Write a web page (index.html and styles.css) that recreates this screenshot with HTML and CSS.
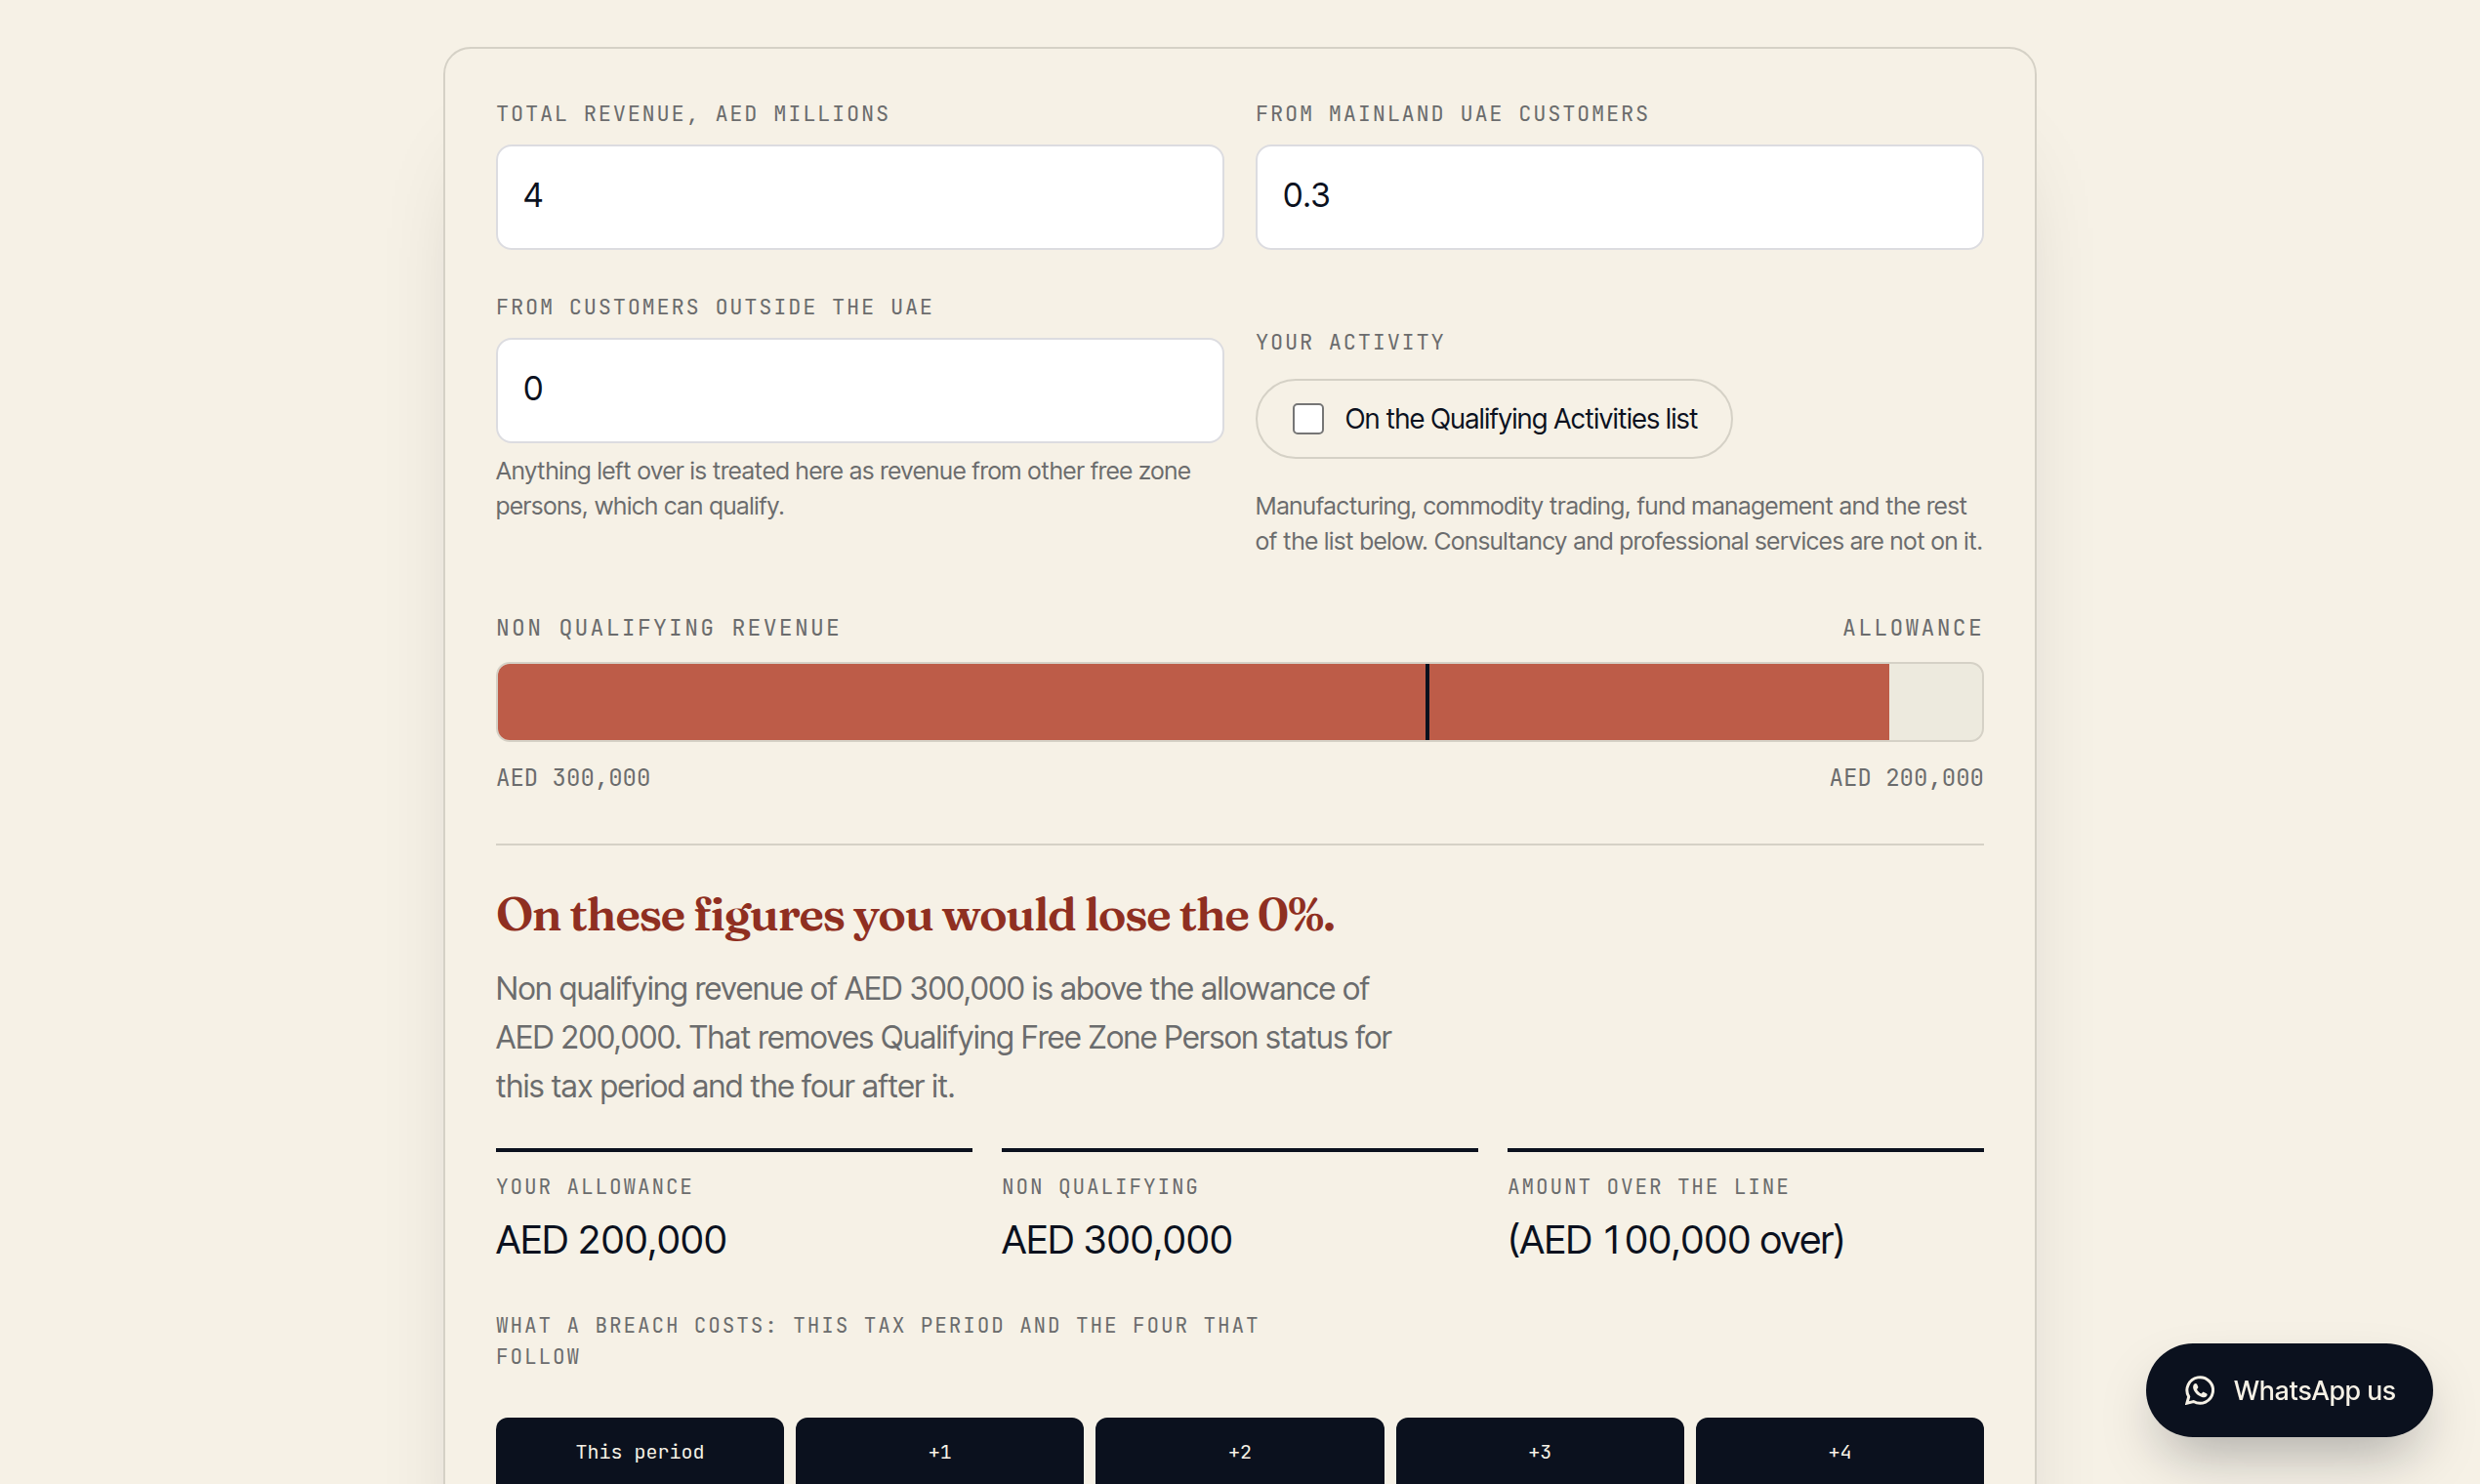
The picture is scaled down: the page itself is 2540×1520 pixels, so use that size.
FILE: index.html
```html
<!DOCTYPE html>
<html lang="en">
<head>
<meta charset="utf-8">
<meta name="viewport" content="width=device-width, initial-scale=1">
<title>Free zone revenue check</title>
<link rel="stylesheet" href="styles.css">
</head>
<body>
<main class="page">
  <section class="card">
    <form class="fields">
      <div class="field">
        <label class="label" for="total">Total revenue, AED millions</label>
        <input class="input" id="total" type="text" inputmode="decimal" value="4">
      </div>
      <div class="field">
        <label class="label" for="mainland">From mainland UAE customers</label>
        <input class="input" id="mainland" type="text" inputmode="decimal" value="0.3">
      </div>
      <div class="field">
        <label class="label" for="outside">From customers outside the UAE</label>
        <input class="input" id="outside" type="text" inputmode="decimal" value="0">
        <p class="hint">Anything left over is treated here as revenue from other free zone persons, which can qualify.</p>
      </div>
      <div class="field field-activity">
        <span class="label">Your activity</span>
        <label class="pill" for="activity"><input class="check" id="activity" type="checkbox">On the Qualifying Activities list</label>
        <p class="hint">Manufacturing, commodity trading, fund management and the rest of the list below. Consultancy and professional services are not on it.</p>
      </div>
    </form>

    <div class="meter">
      <div class="meter-row meter-head"><span>Non qualifying revenue</span><span>Allowance</span></div>
      <div class="track">
        <div class="fill" style="width: 93.75%"></div>
        <div class="marker" style="left: 62.5%"></div>
      </div>
      <div class="meter-row meter-foot"><span>AED 300,000</span><span>AED 200,000</span></div>
    </div>

    <div class="result">
      <h2 class="verdict">On these figures you would lose the 0%.</h2>
      <p class="explain">Non qualifying revenue of AED 300,000 is above the allowance of AED 200,000. That removes Qualifying Free Zone Person status for this tax period and the four after it.</p>
      <dl class="stats">
        <div class="stat"><dt class="caption">Your allowance</dt><dd class="value">AED 200,000</dd></div>
        <div class="stat"><dt class="caption">Non qualifying</dt><dd class="value">AED 300,000</dd></div>
        <div class="stat"><dt class="caption">Amount over the line</dt><dd class="value">(AED 100,000 over)</dd></div>
      </dl>
      <p class="caption costs">What a breach costs: this tax period and the four that follow</p>
      <ol class="periods">
        <li class="period">This period</li>
        <li class="period">+1</li>
        <li class="period">+2</li>
        <li class="period">+3</li>
        <li class="period">+4</li>
      </ol>
    </div>
  </section>
</main>
<a class="whatsapp" href="#whatsapp">
  <svg class="whatsapp-icon" viewBox="0 0 30 30" aria-hidden="true"><path fill="none" stroke="currentColor" stroke-width="3" stroke-linejoin="miter" d="M1.900 28.200 L3.700 21.600 A13.300 13.300 0 1 1 8.600 26.500 Z"/><path fill="currentColor" d="M9.400 8.400c.8-.8 2.200-.7 2.700.4l1.100 2.500c.3.600.1 1.200-.3 1.600l-.9 1.100c.8 1.900 2.500 3.600 4.500 4.500l1.300-1.300c.4-.4 1-.5 1.500-.2l2.500 1.200c1 .5 1.100 1.600.4 2.500-1.200 1.500-3.100 1.900-5.100 1.200-4.100-1.300-7.500-4.500-8.700-8.400-.6-2-.2-3.900 1-5.100z"/></svg>
  WhatsApp us
</a>
</body>
</html>
```
FILE: styles.css
```css
* {
  box-sizing: border-box;
}

:root {
  --paper: #f6f1e6;
  --ink: #0b111e;
  --muted: #6b6c6d;
  --rule: #d5d1c6;
  --mono: "JetBrains Mono", "DejaVu Sans Mono", monospace;
  --sans: "Inter Tight", Inter, sans-serif;
}

body {
  margin: 0;
  height: 100vh;
  overflow: hidden;
  background: var(--paper);
  color: var(--ink);
  font-family: var(--sans);
}

p, h2, dl, dd, ol {
  margin: 0;
  padding: 0;
}

.page {
  padding: 48px;
}

.card {
  max-width: 1632px;
  margin: 0 auto;
  padding: 52px;
  border: 2px solid var(--rule);
  border-radius: 28px;
  background: var(--paper);
  box-shadow: 0 80px 100px -56px rgba(11, 17, 30, 0.3);
}

.fields {
  display: grid;
  grid-template-columns: 1fr 1fr;
  gap: 44px 32px;
}

.field {
  display: flex;
  flex-direction: column;
  align-items: flex-start;
}

.field-activity {
  padding-top: 36px;
}

.label {
  margin-bottom: 16px;
  color: var(--muted);
  font: 22px/30px var(--mono);
  letter-spacing: 0.08em;
  text-transform: uppercase;
}

.field-activity .label {
  margin-bottom: 22px;
}

.input {
  width: 100%;
  height: 108px;
  padding: 0 26px 6px;
  border: 2px solid #dcdce0;
  border-radius: 16px;
  background: #fff;
  color: var(--ink);
  font: 34px/44px var(--sans);
  font-variant-numeric: tabular-nums;
}

.hint {
  margin-top: 10px;
  color: var(--muted);
  font-size: 25px;
  line-height: 36px;
  letter-spacing: 0.01em;
}

.field-activity .hint {
  margin-top: 30px;
}

.pill {
  display: flex;
  align-items: center;
  gap: 22px;
  height: 82px;
  padding: 0 34px 0 36px;
  border: 2px solid var(--rule);
  border-radius: 41px;
  font-size: 28px;
}

.check {
  appearance: none;
  width: 32px;
  height: 32px;
  margin: 0;
  border: 2px solid #767676;
  border-radius: 5px;
  background: #fff;
}

.meter {
  margin-top: 56px;
}

.meter-row {
  display: flex;
  justify-content: space-between;
  color: var(--muted);
  font-family: var(--mono);
  line-height: 30px;
}

.meter-head {
  margin-bottom: 20px;
  font-size: 23px;
  letter-spacing: 0.1em;
  text-transform: uppercase;
}

.meter-foot {
  margin-top: 22px;
  font-size: 24px;
}

.track {
  position: relative;
  height: 82px;
  overflow: hidden;
  border: 2px solid var(--rule);
  border-radius: 14px;
  background: #edeade;
}

.fill {
  height: 100%;
  background: #bd5c48;
}

.marker {
  position: absolute;
  top: 0;
  bottom: 0;
  width: 4px;
  background: var(--ink);
}

.result {
  margin-top: 52px;
  padding-top: 38px;
  border-top: 2px solid var(--rule);
}

.verdict {
  color: #8f2f21;
  font: 600 48px/64px "Fraunces", "Liberation Serif", serif;
  letter-spacing: -0.03em;
}

.explain {
  max-width: 930px;
  margin-top: 20px;
  color: var(--muted);
  font-size: 32px;
  line-height: 50px;
}

.stats {
  display: grid;
  grid-template-columns: repeat(3, 1fr);
  gap: 30px;
  margin-top: 38px;
}

.stat {
  padding-top: 20px;
  border-top: 4px solid var(--ink);
}

.caption {
  color: var(--muted);
  font: 21px/32px var(--mono);
  letter-spacing: 0.09em;
  text-transform: uppercase;
}

.value {
  margin-top: 14px;
  font-size: 40px;
  line-height: 48px;
  font-variant-numeric: tabular-nums;
}

.costs {
  max-width: 840px;
  margin-top: 48px;
}

.periods {
  display: grid;
  grid-template-columns: repeat(5, 1fr);
  gap: 12px;
  margin-top: 46px;
  list-style: none;
}

.period {
  padding: 20px 20px 34px;
  border-radius: 12px;
  background: var(--ink);
  color: var(--paper);
  font: 20px/30px var(--mono);
  text-align: center;
}

.whatsapp {
  position: fixed;
  right: 48px;
  bottom: 48px;
  display: flex;
  align-items: center;
  gap: 20px;
  height: 96px;
  padding: 0 38px 0 40px;
  border-radius: 48px;
  background: var(--ink);
  color: var(--paper);
  font-size: 27px;
  font-weight: 500;
  letter-spacing: 0.02em;
  text-decoration: none;
  box-shadow: 0 28px 60px -16px rgba(11, 17, 30, 0.35);
}

.whatsapp-icon {
  width: 30px;
  height: 30px;
}
```
